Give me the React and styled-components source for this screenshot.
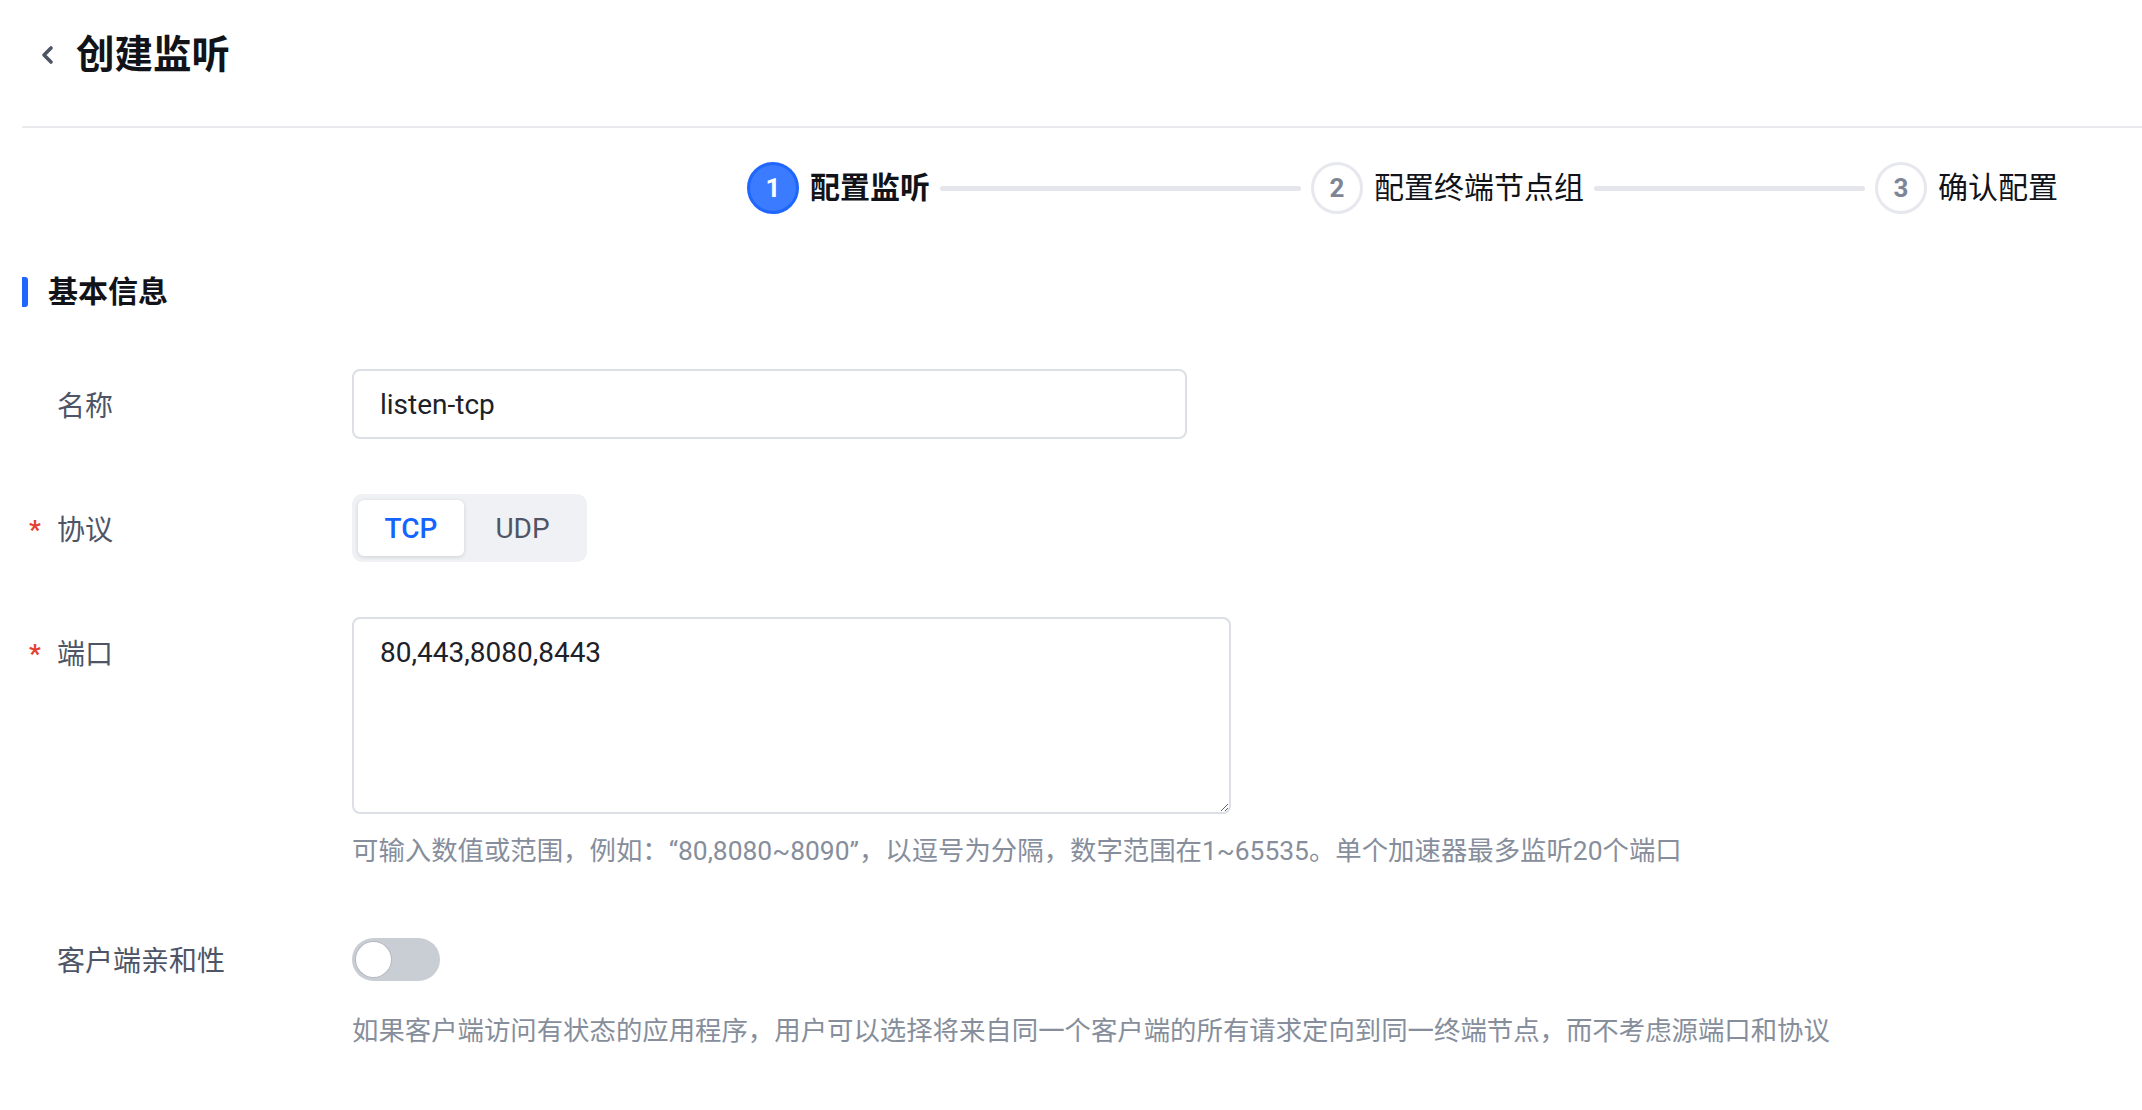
import { useState } from 'react';
import styled, { createGlobalStyle } from 'styled-components';

const GlobalStyle = createGlobalStyle`
  html, body {
    margin: 0;
    padding: 0;
    background: #fff;
  }
  body {
    font-family: Roboto, "Noto Sans CJK SC", "Noto Sans", sans-serif;
    color: #1d2129;
  }
  * {
    box-sizing: border-box;
  }
`;

const Page = styled.div`
  width: 2142px;
  min-height: 1110px;
  padding-left: 22px;
`;

const Header = styled.header`
  display: flex;
  align-items: center;
  gap: 20px;
  padding: 30px 0 46px 16px;
  border-bottom: 2px solid #e8eaee;
`;

const BackButton = styled.button`
  display: flex;
  align-items: center;
  justify-content: center;
  width: 18px;
  height: 50px;
  padding: 0;
  border: none;
  background: none;
  color: #4e5566;
  cursor: pointer;
`;

const Title = styled.h1`
  margin: 0;
  font-size: 38.5px;
  line-height: 50px;
  font-weight: 700;
  color: #111318;
`;

const Steps = styled.ol`
  display: flex;
  justify-content: flex-end;
  list-style: none;
  margin: 34px 0 0;
  padding: 0 84px 0 0;
`;

const Step = styled.li`
  display: flex;
  align-items: center;
  flex: ${(p) => (p.$last ? '0 0 auto' : '0 0 564px')};
`;

const StepDot = styled.span`
  flex: 0 0 52px;
  width: 52px;
  height: 52px;
  border-radius: 50%;
  display: flex;
  align-items: center;
  justify-content: center;
  font-size: 26px;
  font-weight: 700;
  border: 3px solid ${(p) => (p.$active ? '#1f66ff' : '#e6e8ee')};
  background: ${(p) => (p.$active ? '#3a7bff' : '#fff')};
  color: ${(p) => (p.$active ? '#fff' : '#7d8596')};
`;

const StepLabel = styled.span`
  margin-left: 11px;
  font-size: 30px;
  line-height: 40px;
  color: #111318;
  font-weight: ${(p) => (p.$active ? 600 : 400)};
  white-space: nowrap;
`;

const StepLine = styled.span`
  flex: 1;
  height: 5px;
  margin: 0 10px;
  border-radius: 3px;
  background: #e4e6eb;
`;

const SectionTitle = styled.h2`
  display: flex;
  align-items: center;
  gap: 20px;
  margin: 58px 0 57px;
  font-size: 30px;
  line-height: 40px;
  font-weight: 700;
  color: #111318;

  &::before {
    content: '';
    width: 6px;
    height: 30px;
    border-radius: 0 3px 3px 0;
    background: #1f66ff;
  }
`;

const FormItem = styled.div`
  display: flex;
  margin-bottom: 55px;
`;

const Label = styled.label`
  flex: 0 0 330px;
  display: flex;
  align-items: center;
  height: ${(p) => p.$h || 70}px;
  padding-left: 7px;
  font-size: 28px;
  color: #4e5566;
`;

const Required = styled.span`
  width: 28px;
  color: #e63f32;
  font-size: 26px;
  font-weight: 700;
  line-height: 1;
  padding-top: 4px;
`;

const Control = styled.div`
  display: flex;
  flex-direction: column;
`;

const TextInput = styled.input`
  width: 835px;
  height: 70px;
  padding: 0 26px;
  border: 2px solid #dcdfe6;
  border-radius: 8px;
  font-family: inherit;
  font-size: 28px;
  color: #1d2129;
  outline: none;
`;

const Segmented = styled.div`
  display: flex;
  height: 68px;
  padding: 6px;
  border-radius: 10px;
  background: #f0f1f4;
`;

const SegButton = styled.button`
  width: ${(p) => p.$w}px;
  height: 56px;
  padding: 0;
  border: none;
  border-radius: 6px;
  font-family: inherit;
  font-size: 28px;
  font-weight: ${(p) => (p.$active ? 500 : 400)};
  color: ${(p) => (p.$active ? '#1664ff' : '#4e5566')};
  background: ${(p) => (p.$active ? '#fff' : 'transparent')};
  box-shadow: ${(p) => (p.$active ? '0 1px 4px rgba(0, 0, 0, 0.14)' : 'none')};
  cursor: pointer;
`;

const TextArea = styled.textarea`
  width: 879px;
  height: 197px;
  padding: 14px 26px;
  border: 2px solid #dcdfe6;
  border-radius: 8px;
  font-family: inherit;
  font-size: 28px;
  line-height: 40px;
  color: #1d2129;
  outline: none;
  resize: vertical;
`;

const Help = styled.p`
  margin: 19px 0 0;
  font-size: 26.4px;
  line-height: 36px;
  color: #868e9c;
  white-space: nowrap;
`;

const ToggleRow = styled.div`
  display: flex;
  align-items: center;
  height: 70px;
`;

const Switch = styled.button`
  position: relative;
  width: 88px;
  height: 43px;
  padding: 0;
  border: none;
  border-radius: 22px;
  background: ${(p) => (p.$on ? '#1f66ff' : '#c9cdd4')};
  cursor: pointer;

  &::after {
    content: '';
    position: absolute;
    top: 4px;
    left: ${(p) => (p.$on ? '49px' : '4px')};
    width: 35px;
    height: 35px;
    border-radius: 50%;
    background: #fff;
    box-shadow: 0 0 0 1px #b4b9c3;
  }
`;

const steps = ['配置监听', '配置终端节点组', '确认配置'];
const protocols = [
  { name: 'TCP', width: 106 },
  { name: 'UDP', width: 117 },
];

const App = () => {
  const [protocol, setProtocol] = useState('TCP');
  const [affinity, setAffinity] = useState(false);

  return (
    <Page>
      <GlobalStyle />
      <Header>
        <BackButton aria-label="返回">
          <svg width="14" height="20" viewBox="0 0 14 20" fill="none">
            <path d="M11 3L4 10l7 7" stroke="currentColor" strokeWidth="3.6" strokeLinecap="round" strokeLinejoin="round" />
          </svg>
        </BackButton>
        <Title>创建监听</Title>
      </Header>

      <Steps>
        {steps.map((s, i) => (
          <Step key={s} $last={i === steps.length - 1}>
            <StepDot $active={i === 0}>{i + 1}</StepDot>
            <StepLabel $active={i === 0}>{s}</StepLabel>
            {i < steps.length - 1 && <StepLine />}
          </Step>
        ))}
      </Steps>

      <SectionTitle>基本信息</SectionTitle>

      <FormItem>
        <Label>
          <Required />
          名称
        </Label>
        <Control>
          <TextInput defaultValue="listen-tcp" />
        </Control>
      </FormItem>

      <FormItem>
        <Label $h={68}>
          <Required>*</Required>
          协议
        </Label>
        <Control>
          <Segmented>
            {protocols.map((p) => (
              <SegButton
                key={p.name}
                $w={p.width}
                $active={protocol === p.name}
                onClick={() => setProtocol(p.name)}
              >
                {p.name}
              </SegButton>
            ))}
          </Segmented>
        </Control>
      </FormItem>

      <FormItem>
        <Label>
          <Required>*</Required>
          端口
        </Label>
        <Control>
          <TextArea defaultValue="80,443,8080,8443" />
          <Help>可输入数值或范围，例如：“80,8080~8090”，以逗号为分隔，数字范围在1~65535。单个加速器最多监听20个端口</Help>
        </Control>
      </FormItem>

      <FormItem>
        <Label>
          <Required />
          客户端亲和性
        </Label>
        <Control>
          <ToggleRow>
            <Switch $on={affinity} onClick={() => setAffinity(!affinity)} aria-label="客户端亲和性" />
          </ToggleRow>
          <Help>如果客户端访问有状态的应用程序，用户可以选择将来自同一个客户端的所有请求定向到同一终端节点，而不考虑源端口和协议</Help>
        </Control>
      </FormItem>
    </Page>
  );
};

export default App;
